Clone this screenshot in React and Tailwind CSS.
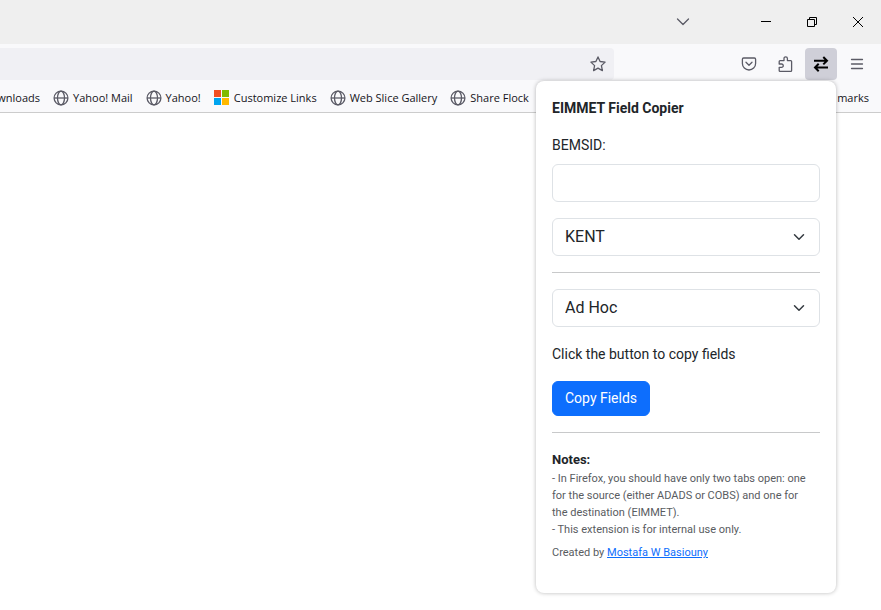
import React from "react";

function Globe() {
  return (
    <svg className="size-4 shrink-0" viewBox="0 0 16 16" fill="none" stroke="#5b5b66" strokeWidth="1.3" aria-hidden="true">
      <circle cx="8" cy="8" r="6.9" />
      <ellipse cx="8" cy="8" rx="3.5" ry="6.9" />
      <path d="M1 8h14" />
    </svg>
  );
}

function Microsoft() {
  return (
    <svg className="size-4 shrink-0" viewBox="0 0 16 16" aria-hidden="true">
      <path fill="#f25022" d="M0 0h7v7H0z" />
      <path fill="#7fba00" d="M8 0h7v7H8z" />
      <path fill="#00a4ef" d="M0 8h7v7H0z" />
      <path fill="#ffb900" d="M8 8h7v7H8z" />
    </svg>
  );
}

function Bookmark({ icon, label }) {
  return (
    <a href="#" className="flex shrink-0 items-center gap-1">
      {icon}
      <span>{label}</span>
    </a>
  );
}

function SelectBox({ id, label, value }) {
  return (
    <div className="relative">
      <select
        id={id}
        aria-label={label}
        defaultValue={value}
        className="block h-[38px] w-full appearance-none rounded-md border border-[#dee2e6] bg-white px-3 text-base leading-6 text-[#212529]"
      >
        <option>{value}</option>
      </select>
      <svg className="pointer-events-none absolute top-[13px] right-[15px] size-3" viewBox="0 0 16 16" fill="none" stroke="#343a40" strokeWidth="2" strokeLinecap="round" strokeLinejoin="round" aria-hidden="true">
        <path d="m2 5 6 6 6-6" />
      </svg>
    </div>
  );
}

function Popup() {
  return (
    <section className="absolute top-[81px] right-[45px] w-[300px] rounded-lg bg-white px-4 pt-4 pb-8 font-[Roboto,sans-serif] text-sm leading-[21px] text-[#212529] shadow-[0_0_4px_rgba(0,0,0,0.28)]">
      <h1 className="mb-4 leading-[22px] font-bold">EIMMET Field Copier</h1>
      <label htmlFor="bemsid" className="mb-2 block">BEMSID:</label>
      <input id="bemsid" type="text" className="mb-4 block h-[38px] w-full rounded-md border border-[#dee2e6] bg-white px-3 text-base" />
      <SelectBox id="site" label="Site" value="KENT" />
      <hr className="my-4 border-[#c8c9ca]" />
      <SelectBox id="kind" label="Type" value="Ad Hoc" />
      <p className="my-4 leading-[22px]">Click the button to copy fields</p>
      <button type="button" className="block rounded-md border border-[#0d6efd] bg-[#0d6efd] px-3 py-1.5 text-white">Copy Fields</button>
      <hr className="my-4 border-[#c8c9ca]" />
      <h2 className="text-[13px] leading-[21px] font-bold">Notes:</h2>
      <div className="pr-2 text-[11px] leading-[17px] text-[#595c5f]">
        <p>- In Firefox, you should have only two tabs open: one for the source (either ADADS or COBS) and one for the destination (EIMMET).</p>
        <p>- This extension is for internal use only.</p>
        <p className="mt-1.5">
          Created by <a href="#" className="text-[#0d6efd] underline">Mostafa W Basiouny</a>
        </p>
      </div>
    </section>
  );
}

export default function App() {
  return (
    <div className="relative min-h-screen overflow-hidden bg-white font-['Open_Sans','Noto_Sans',sans-serif]">
      <header className="bg-[#f9f9fb]">
        <div className="flex h-11 items-center justify-end bg-[#efefef]">
          <button type="button" aria-label="List all tabs" className="mr-11 flex size-8 items-center justify-center">
            <svg className="size-4" viewBox="0 0 16 16" fill="none" stroke="#5b5b66" strokeWidth="1.3" strokeLinecap="round" strokeLinejoin="round">
              <path d="m2.5 5 5.5 5.5L13.5 5" />
            </svg>
          </button>
          <div className="flex text-black">
            <button type="button" aria-label="Minimize" className="flex h-8 w-[46px] items-center justify-center">
              <svg className="size-3" viewBox="0 0 12 12" stroke="currentColor"><path d="M1 5.5h10" /></svg>
            </button>
            <button type="button" aria-label="Restore" className="flex h-8 w-[46px] items-center justify-center">
              <svg className="size-3" viewBox="0 0 12 12" fill="none" stroke="currentColor"><path d="M1.5 3.5h7v7h-7zM3.5 3.500v-2h7v7h-2" /></svg>
            </button>
            <button type="button" aria-label="Close" className="flex h-8 w-[46px] items-center justify-center">
              <svg className="size-3" viewBox="0 0 12 12" fill="none" stroke="currentColor"><path d="m1 1 10 10M11 1 1 11" /></svg>
            </button>
          </div>
        </div>

        <div className="flex h-10 items-center pr-2">
          <div className="flex h-8 flex-1 items-center justify-end rounded-r bg-[#f0f0f4] pr-2">
            <button type="button" aria-label="Bookmark this page">
              <svg className="size-4" viewBox="0 0 16 16" fill="none" stroke="#5b5b66" strokeWidth="1.3" strokeLinejoin="round">
                <path d="m8 .9 2.100 4.600 5 .6-3.700 3.500 1 5-4.400-2.500-4.400 2.500 1-5L.9 6.100l5-.6z" />
              </svg>
            </button>
          </div>
          <div className="ml-[119px] flex gap-1 text-[#5b5b66]">
            <button type="button" aria-label="Save to Pocket" className="flex size-8 items-center justify-center">
              <svg className="size-4" viewBox="0 0 16 16" fill="none" stroke="currentColor" strokeWidth="1.3" strokeLinecap="round" strokeLinejoin="round">
                <path d="M2.600 2h10.800c.7 0 1.200.5 1.200 1.200v4.200a6.600 6.600 0 0 1-13.200 0V3.200C1.400 2.500 1.900 2 2.600 2z" />
                <path d="M5 6.300l3 2.900 3-2.900" />
              </svg>
            </button>
            <button type="button" aria-label="Extensions" className="flex size-8 items-center justify-center">
              <svg className="size-4" viewBox="0 0 16 16" fill="none" stroke="currentColor" strokeWidth="1.3" strokeLinejoin="round">
                <path d="M3.100 4.600h3.900V2.500a1.700 1.700 0 0 1 3.400 0v2.100h3.300c.6 0 .9.4.9.9v9c0 .5-.4.9-.9.9H3.100c-.5 0-.9-.4-.9-.9v-3.200h2.400a1.650 1.650 0 0 0 0-3.300H2.200V5.500c0-.5.4-.9.9-.9z" />
              </svg>
            </button>
            <button type="button" aria-label="EIMMET Field Copier" className="flex size-8 items-center justify-center rounded bg-[#cfcfd8] text-black">
              <svg className="size-4" viewBox="0 0 16 16" fill="none" stroke="currentColor" strokeWidth="2">
                <path d="M1 4.700h13M10.300 1 14 4.700l-3.700 3.700M15 11.500H2M5.700 7.800 2 11.500l3.700 3.700" />
              </svg>
            </button>
            <button type="button" aria-label="Menu" className="flex size-8 items-center justify-center">
              <svg className="size-4" viewBox="0 0 16 16" fill="none" stroke="currentColor" strokeWidth="1.3" strokeLinecap="round">
                <path d="M2.500 3.500h11M2.500 8h11M2.500 12.500h11" />
              </svg>
            </button>
          </div>
        </div>

        <nav className="flex h-[29px] items-center gap-[13px] overflow-hidden border-b border-[#cccccc] pr-3 text-[11px] leading-4 text-[#15141a]">
          <a href="#" className="flex w-10 shrink-0 justify-end">wnloads</a>
          <Bookmark icon={<Globe />} label="Yahoo! Mail" />
          <Bookmark icon={<Globe />} label="Yahoo!" />
          <Bookmark icon={<Microsoft />} label="Customize Links" />
          <Bookmark icon={<Globe />} label="Web Slice Gallery" />
          <Bookmark icon={<Globe />} label="Share Flock" />
          <a href="#" className="ml-auto">marks</a>
        </nav>
      </header>
      <Popup />
    </div>
  );
}
